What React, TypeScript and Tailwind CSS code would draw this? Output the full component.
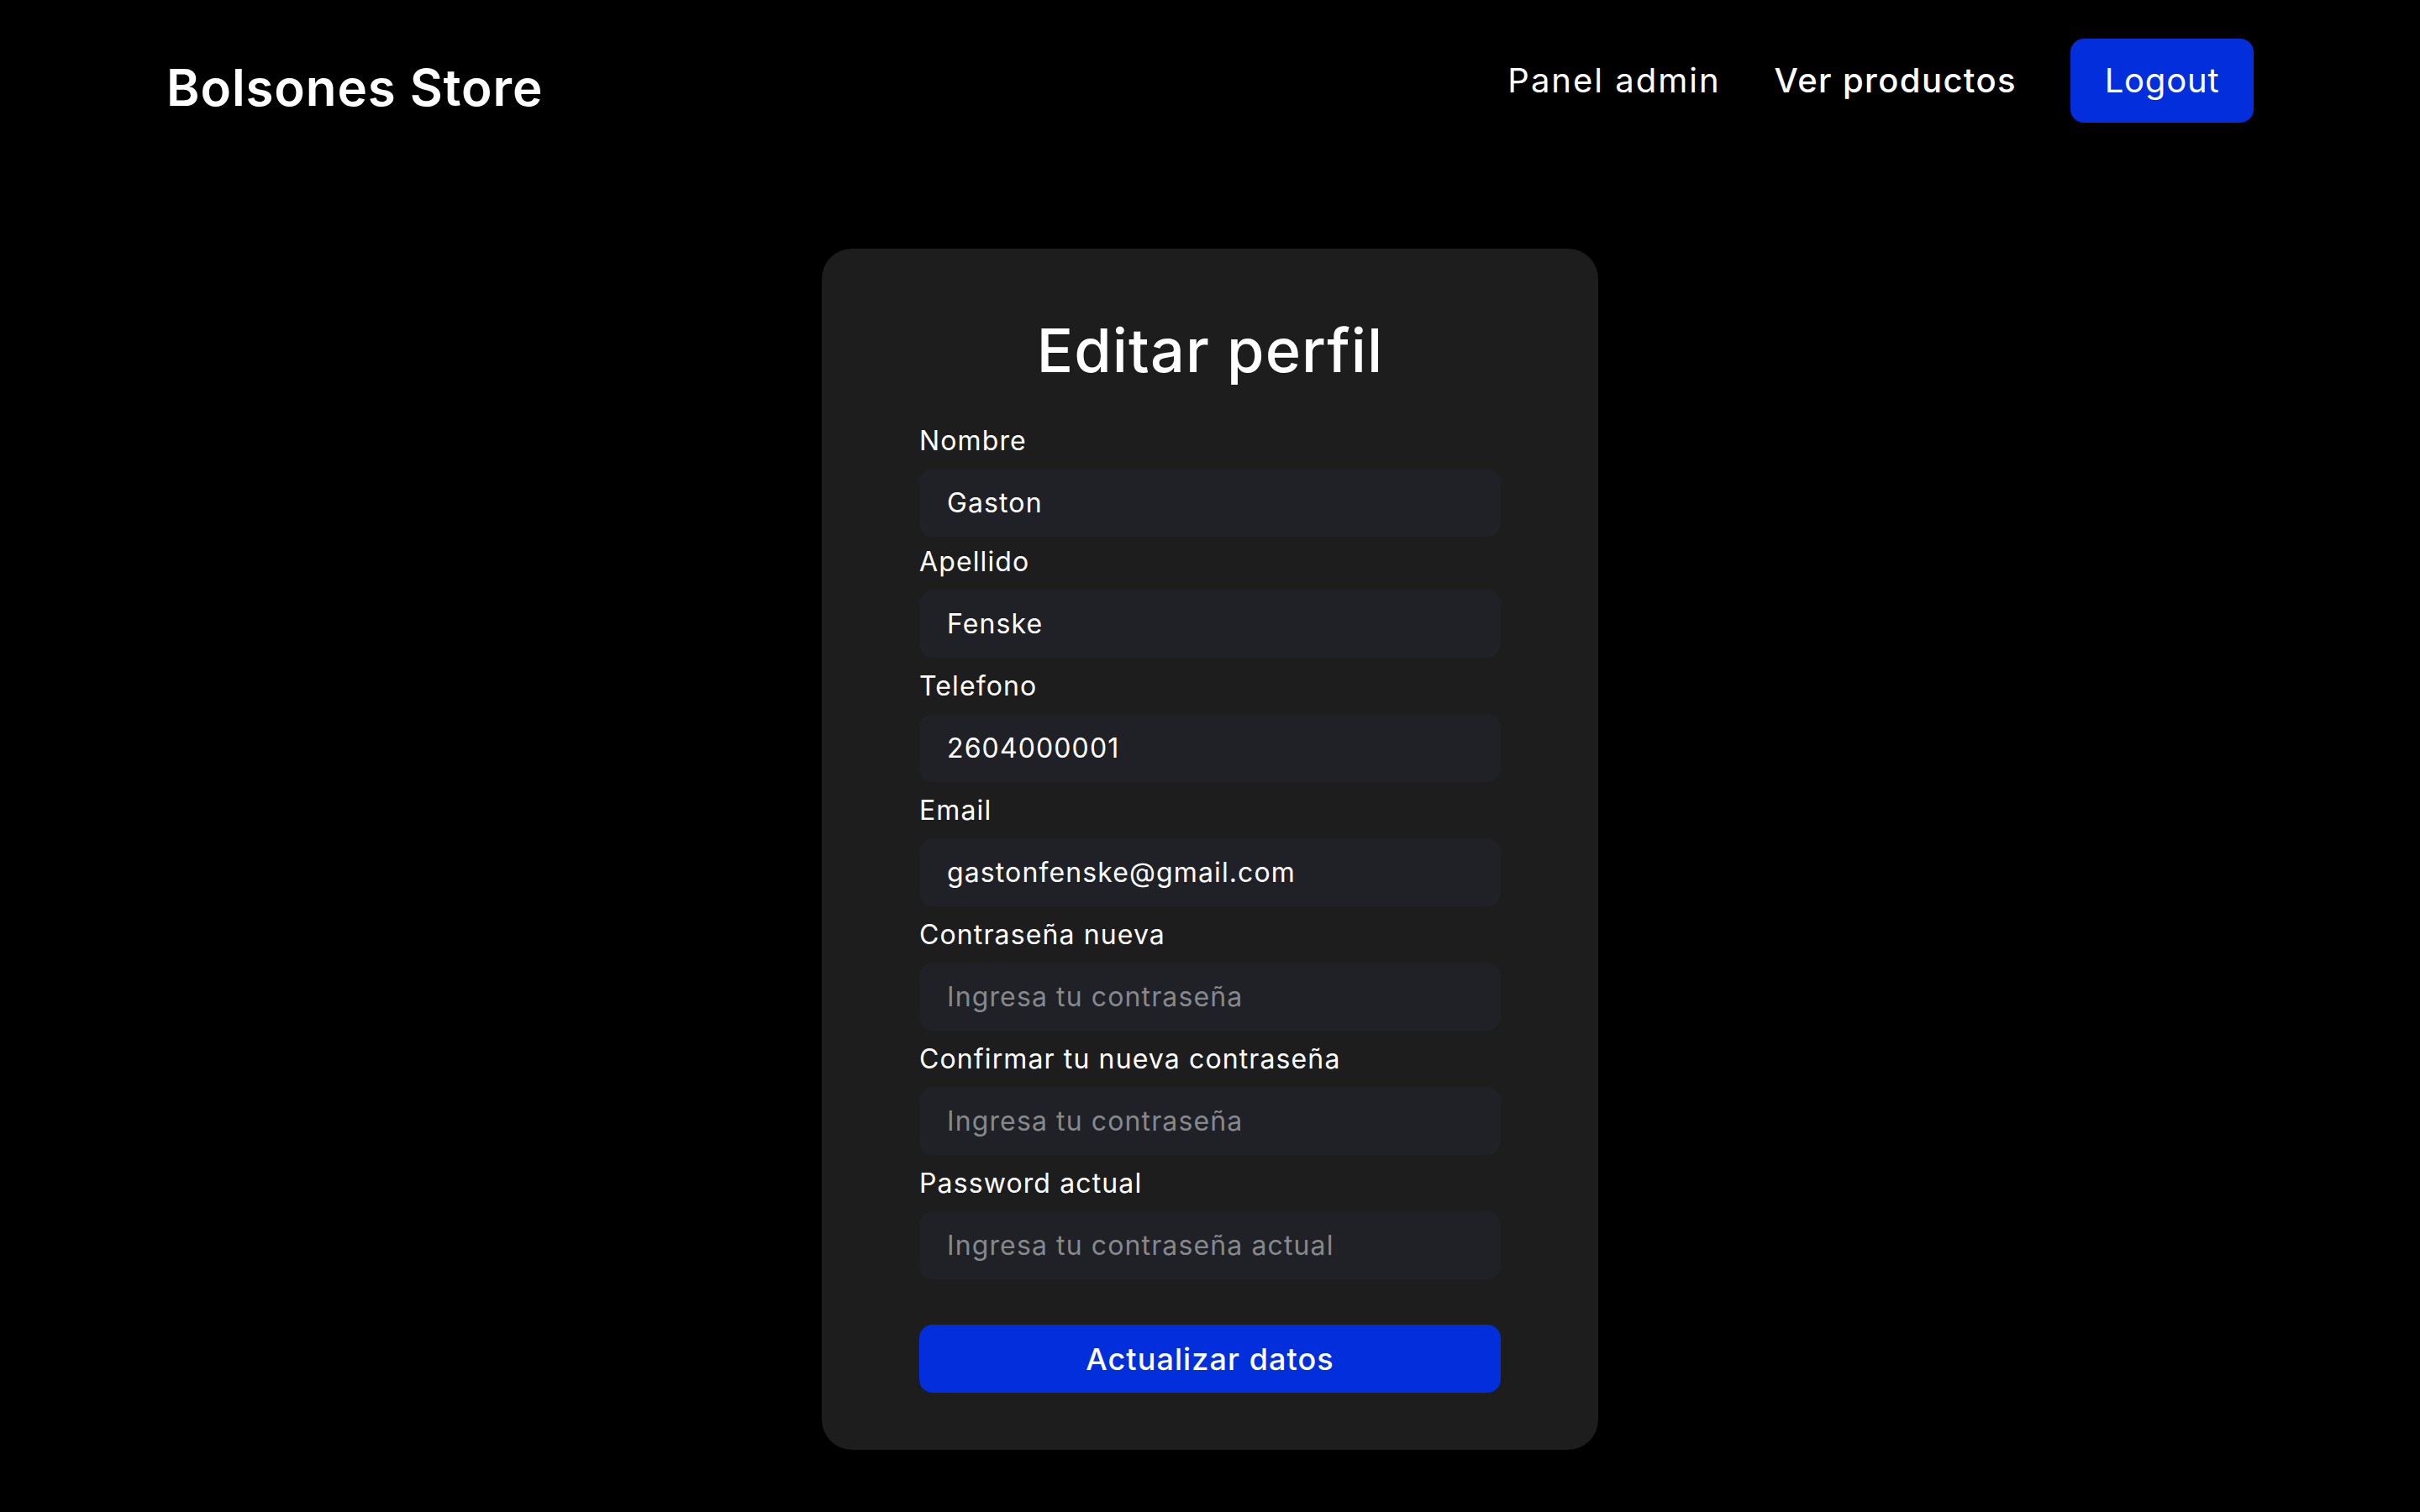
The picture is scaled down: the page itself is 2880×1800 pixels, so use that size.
import { useState } from 'react'

const fields = [
  { label: 'Nombre', value: 'Gaston', placeholder: '' },
  { label: 'Apellido', value: 'Fenske', placeholder: '' },
  { label: 'Telefono', value: '2604000001', placeholder: '' },
  { label: 'Email', value: 'gastonfenske@gmail.com', placeholder: '' },
  { label: 'Contraseña nueva', value: '', placeholder: 'Ingresa tu contraseña' },
  { label: 'Confirmar tu nueva contraseña', value: '', placeholder: 'Ingresa tu contraseña' },
  { label: 'Password actual', value: '', placeholder: 'Ingresa tu contraseña actual' },
]

function Field({ label, value, placeholder, first }: { label: string; value: string; placeholder: string; first: boolean }) {
  const [val, setVal] = useState(value)
  return (
    <div className={`flex flex-col ${first ? 'mb-[-4px]' : ''}`}>
      <label className="text-[32px] leading-[48px] tracking-[0.035em] text-white">{label}</label>
      <input
        value={val}
        onChange={e => setVal(e.target.value)}
        placeholder={placeholder}
        className="mt-[9px] h-[81px] w-full rounded-2xl bg-[#1f2126] px-[33px] text-[32px] tracking-[0.035em] text-white placeholder:text-[#87888c] outline-none"
      />
    </div>
  )
}

export default function App() {
  return (
    <div className="min-h-screen bg-black font-['Inter',sans-serif] text-white">
      <header className="flex items-center justify-between px-[198px] pt-[46px]">
        <h1 className="pt-4 text-[60px] leading-[72px] font-semibold tracking-[0.015em]">Bolsones Store</h1>
        <nav className="flex items-center gap-16 text-[40px]">
          <a href="#" className="font-normal tracking-[0.05em]">Panel admin</a>
          <a href="#" className="font-medium tracking-[0.035em]">Ver productos</a>
          <button className="h-[100px] w-[218px] rounded-2xl bg-[#022fdb] text-[40px] tracking-[0.02em] text-white">
            Logout
          </button>
        </nav>
      </header>

      <main className="flex justify-center pt-[150px] pb-[73px]">
        <div className="w-[924px] rounded-[36px] bg-[#1d1d1d] px-[116px] pt-[81px] pb-[68px]">
          <h2 className="text-center text-[72px] leading-[80px] font-medium tracking-[0.015em]">Editar perfil</h2>
          <form className="mt-[44px] flex flex-col gap-[10px]" onSubmit={e => e.preventDefault()}>
            {fields.map((f, i) => (
              <Field key={f.label} {...f} first={i === 0} />
            ))}
            <button
              type="submit"
              className="mt-[44px] h-[81px] w-full rounded-2xl bg-[#022fdb] text-[36px] font-medium tracking-[0.03em] text-white"
            >
              Actualizar datos
            </button>
          </form>
        </div>
      </main>
    </div>
  )
}
